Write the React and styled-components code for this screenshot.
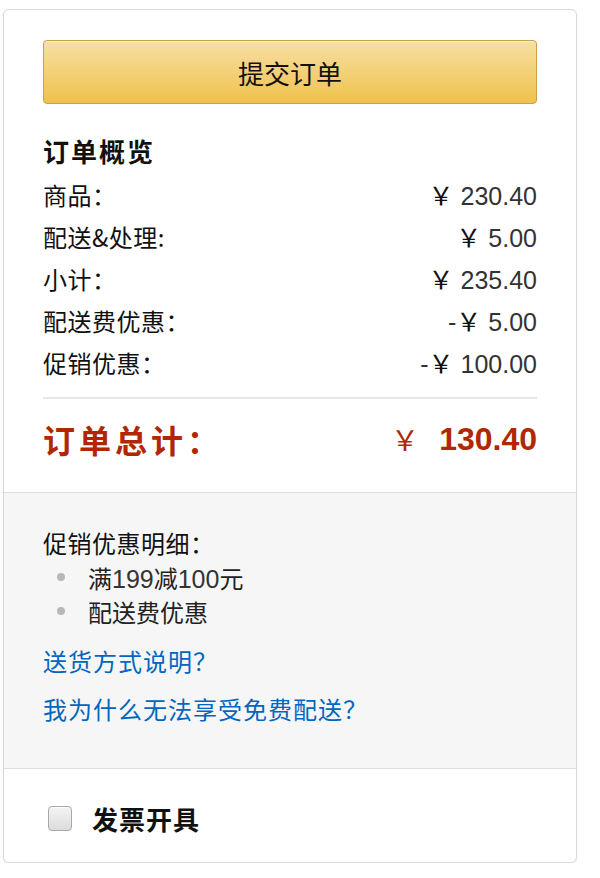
import React from "react";
import styled, { createGlobalStyle } from "styled-components";

const GlobalStyle = createGlobalStyle`
  html, body {
    margin: 0;
    padding: 0;
    background: #ffffff;
  }
  body {
    font-family: "Liberation Sans", "Noto Sans CJK SC", sans-serif;
    color: #111111;
  }
`;

const Page = styled.div`
  padding: 9px 0 0 3px;
`;

const Card = styled.div`
  box-sizing: border-box;
  width: 574px;
  border: 1px solid #d9d9d9;
  border-radius: 6px;
  overflow: hidden;
  background: #ffffff;
  box-shadow: 0 1px 2px rgba(0, 0, 0, 0.08);
`;

const Summary = styled.section`
  padding: 30px 39px 33px 39px;
`;

const SubmitButton = styled.button`
  display: block;
  box-sizing: border-box;
  width: 100%;
  height: 64px;
  border: 1px solid #c8a047;
  border-radius: 4px;
  background: linear-gradient(to bottom, #f7dfa5, #f0c14b);
  box-shadow: inset 0 1px 0 rgba(255, 255, 255, 0.45);
  font-family: "Noto Sans CJK SC", sans-serif;
  font-size: 26px;
  color: #111111;
  cursor: pointer;
  padding: 0;
`;

const Heading = styled.h3`
  margin: 32px 0 7px;
  font-size: 26px;
  line-height: 30px;
  font-weight: 700;
  letter-spacing: 2px;
  color: #111111;
  font-family: "Noto Sans CJK SC", sans-serif;
`;

const Row = styled.div`
  display: flex;
  justify-content: space-between;
  align-items: center;
  height: 42px;
  font-size: 24px;
  color: #111111;
`;

const Label = styled.span`
  font-family: "Noto Sans CJK SC", sans-serif;
  letter-spacing: 0.5px;
`;

const Amount = styled.span`
  font-family: "Liberation Sans", sans-serif;
  font-size: 25px;
  color: #333333;
  white-space: pre;
`;

const Yen = styled.span`
  color: #111111;
  font-family: "Noto Sans CJK SC", sans-serif;
  font-size: 25px;
`;

const Divider = styled.hr`
  margin: 14px 0 0;
  border: 0;
  height: 2px;
  background: #e7e7e7;
`;

const TotalRow = styled.div`
  display: flex;
  justify-content: space-between;
  align-items: center;
  margin-top: 20px;
  height: 40px;
  color: #b12704;
`;

const TotalLabel = styled.span`
  font-family: "Noto Sans CJK SC", sans-serif;
  font-size: 32px;
  font-weight: 700;
  letter-spacing: 4px;
`;

const TotalAmount = styled.span`
  display: flex;
  align-items: center;
  gap: 20px;
`;

const TotalYen = styled.span`
  font-family: "Noto Sans CJK SC", sans-serif;
  font-size: 28px;
`;

const TotalValue = styled.span`
  font-family: "Liberation Sans", sans-serif;
  font-size: 32px;
  font-weight: 700;
`;

const Details = styled.section`
  border-top: 1px solid #dddddd;
  background: #f6f6f6;
  padding: 33px 39px 35px 39px;
  font-family: "Noto Sans CJK SC", sans-serif;
  font-size: 24px;
`;

const DetailTitle = styled.div`
  line-height: 34px;
  color: #111111;
  letter-spacing: 0.5px;
`;

const BulletList = styled.ul`
  list-style: none;
  margin: 0;
  padding: 0;
`;

const BulletItem = styled.li`
  display: flex;
  align-items: center;
  height: 34px;
  color: #222222;

  &::before {
    content: "";
    width: 8px;
    height: 8px;
    border-radius: 50%;
    background: #b8b8b8;
    margin: 0 23px 0 14px;
  }
`;

const Num = styled.span`
  font-family: "Liberation Sans", sans-serif;
  font-size: 25px;
  color: #333333;
`;

const LinkList = styled.div`
  margin-top: 9px;
`;

const HelpLink = styled.a`
  display: block;
  line-height: 48px;
  color: #0066c0;
  text-decoration: none;
  font-size: 24px;
  letter-spacing: 1px;
`;

const Invoice = styled.label`
  display: flex;
  align-items: center;
  gap: 20px;
  border-top: 1px solid #dddddd;
  padding: 31px 44px 26px 44px;
  height: 36px;
  cursor: pointer;
`;

const Box = styled.input`
  appearance: none;
  margin: 0;
  width: 24px;
  height: 25px;
  box-sizing: border-box;
  border: 1px solid #a9a9a9;
  border-radius: 4px;
  background: linear-gradient(to bottom, #f4f4f4, #dcdcdc);
  box-shadow: inset 0 1px 1px rgba(255, 255, 255, 0.8);
`;

const InvoiceText = styled.span`
  font-family: "Noto Sans CJK SC", sans-serif;
  font-size: 26px;
  font-weight: 700;
  letter-spacing: 1px;
  color: #111111;
`;

const lines = [
  { label: "商品：", sign: "", value: "230.40" },
  { label: "配送&处理:", sign: "", value: "5.00" },
  { label: "小计：", sign: "", value: "235.40" },
  { label: "配送费优惠：", sign: "-", value: "5.00" },
  { label: "促销优惠：", sign: "-", value: "100.00" },
];

export default function App() {
  return (
    <>
      <GlobalStyle />
      <Page>
        <Card>
          <Summary>
            <SubmitButton type="button">提交订单</SubmitButton>
            <Heading>订单概览</Heading>
            {lines.map((l) => (
              <Row key={l.label}>
                <Label>{l.label}</Label>
                <Amount>
                  {l.sign}
                  <Yen>￥</Yen> {l.value}
                </Amount>
              </Row>
            ))}
            <Divider />
            <TotalRow>
              <TotalLabel>订单总计：</TotalLabel>
              <TotalAmount>
                <TotalYen>￥</TotalYen>
                <TotalValue>130.40</TotalValue>
              </TotalAmount>
            </TotalRow>
          </Summary>
          <Details>
            <DetailTitle>促销优惠明细：</DetailTitle>
            <BulletList>
              <BulletItem>
                <span>
                  满<Num>199</Num>减<Num>100</Num>元
                </span>
              </BulletItem>
              <BulletItem>配送费优惠</BulletItem>
            </BulletList>
            <LinkList>
              <HelpLink href="#">送货方式说明？</HelpLink>
              <HelpLink href="#">我为什么无法享受免费配送？</HelpLink>
            </LinkList>
          </Details>
          <Invoice>
            <Box type="checkbox" />
            <InvoiceText>发票开具</InvoiceText>
          </Invoice>
        </Card>
      </Page>
    </>
  );
}
